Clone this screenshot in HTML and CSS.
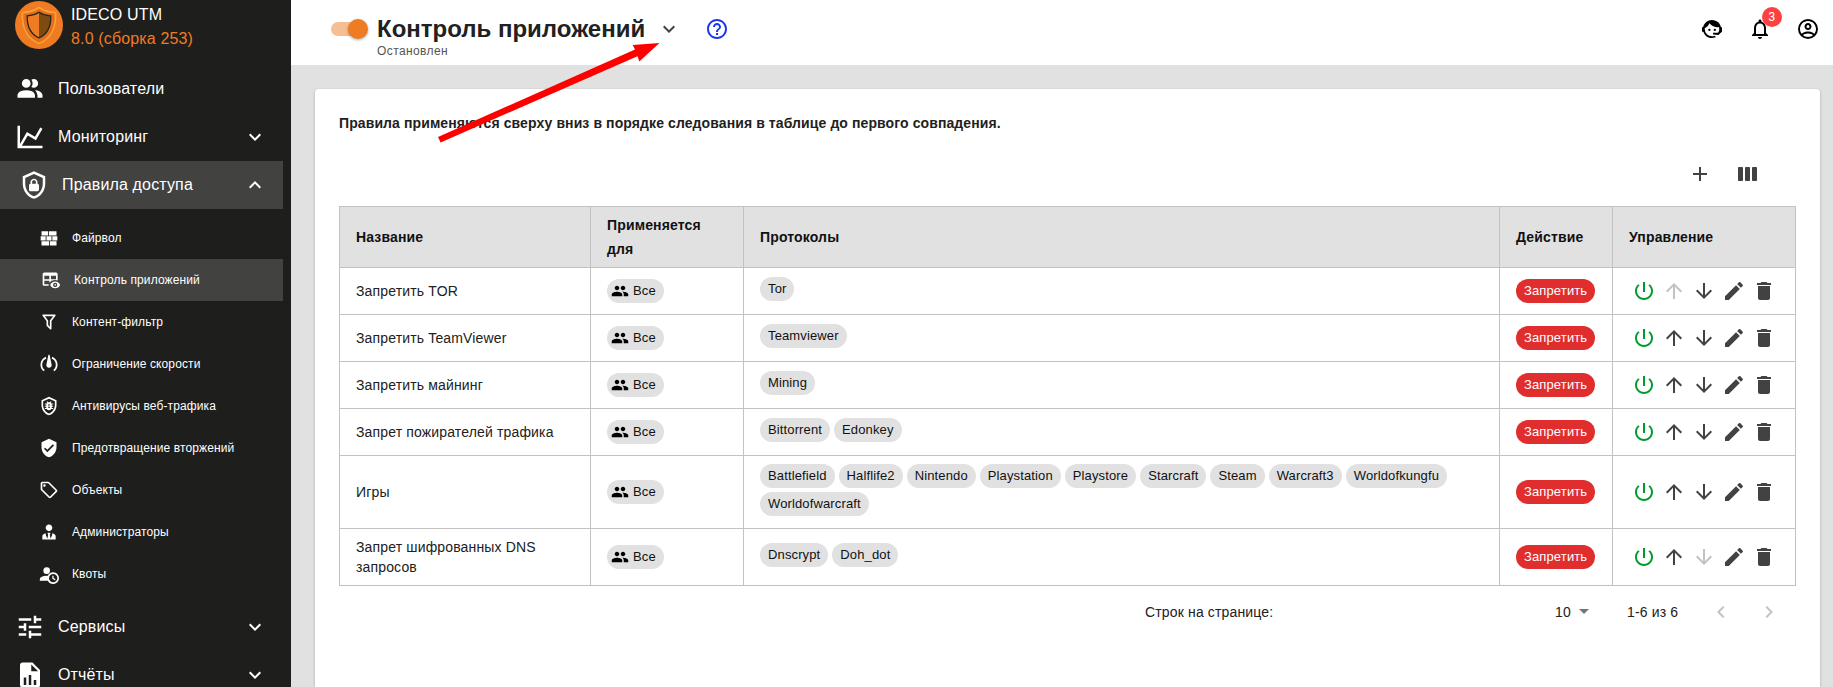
FILE: index.html
```html
<!DOCTYPE html>
<html lang="ru">
<head>
<meta charset="utf-8">
<title>IDECO UTM – Контроль приложений</title>
<link rel="stylesheet" href="styles.css">
</head>
<body>
<svg class="sprite" aria-hidden="true">
  <symbol id="users" viewBox="0 0 24 24"><path d="M13.07 10.41A5 5 0 0 0 13.07 4.59A3.39 3.39 0 0 1 15 4A3.5 3.5 0 0 1 15 11A3.39 3.39 0 0 1 13.07 10.41M5.5 7.5A3.5 3.5 0 1 1 12.5 7.5A3.5 3.5 0 0 1 5.5 7.5M16 17V19H2V17S2 13 9 13S16 17 16 17M15.95 13A5.32 5.32 0 0 1 18 17V19H22V17S22 13.37 15.95 13Z"/></symbol>
  <symbol id="chart" viewBox="0 0 24 24"><path d="M16 11.78L20.24 4.45L21.97 5.45L16.74 14.5L10.23 10.75L5.46 19H22V21H2V3H4V17.54L9.5 8L16 11.78Z"/></symbol>
  <symbol id="shield-lock" viewBox="0 0 24 24"><path d="M21 11C21 16.55 17.16 21.74 12 23C6.84 21.74 3 16.55 3 11V5L12 1L21 5V11M12 21C15.75 20 19 15.54 19 11.22V6.3L12 3.18L5 6.3V11.22C5 15.54 8.25 20 12 21M14.8 11V9.5C14.8 8.1 13.4 7 12 7C10.6 7 9.2 8.1 9.2 9.5V11C8.6 11 8 11.6 8 12.2V15.7C8 16.4 8.6 17 9.2 17H14.7C15.4 17 16 16.4 16 15.8V12.3C16 11.6 15.4 11 14.8 11M13.5 11H10.5V9.5C10.5 8.7 11.2 8.2 12 8.2C12.8 8.2 13.5 8.7 13.5 9.5V11Z"/></symbol>
  <symbol id="wall" viewBox="0 0 24 24"><path d="M3 16H12V21H3V16M2 10H8V15H2V10M9 10H15V15H9V10M16 10H22V15H16V10M13 16H21V21H13V16M3 4H11V9H3V4M12 4H21V9H12V4Z"/></symbol>
  <symbol id="table-eye" viewBox="0 0 24 24"><path d="M17 16.88C17.56 16.88 18 17.32 18 17.88S17.56 18.88 17 18.88 16 18.43 16 17.88 16.44 16.88 17 16.88M17 13.88C19.73 13.88 22.06 15.54 23 17.88C22.06 20.22 19.73 21.88 17 21.88S11.94 20.22 11 17.88C11.94 15.54 14.27 13.88 17 13.88M17 15.38C15.62 15.38 14.5 16.5 14.5 17.88S15.62 20.38 17 20.38 19.5 19.26 19.5 17.88 18.38 15.38 17 15.38M18 3H4C2.9 3 2 3.9 2 5V17C2 18.1 2.9 19 4 19H9.42C9.26 18.68 9.12 18.34 9 18C9.12 17.66 9.26 17.32 9.42 17H4V13H10V15.29C10.72 14.54 11.72 13.74 12 13.56V13H13.15C14.28 12.26 15.62 11.88 17 11.88C18.06 11.88 19.07 12.1 20 12.5V5C20 3.9 19.1 3 18 3M10 11H4V7H10V11M18 11H12V7H18V11Z"/></symbol>
  <symbol id="filter" viewBox="0 0 24 24"><path d="M15 19.88C15.04 20.18 14.94 20.5 14.71 20.71C14.32 21.1 13.69 21.1 13.3 20.71L9.29 16.7C9.06 16.47 8.96 16.16 9 15.87V10.75L4.21 4.62C3.87 4.19 3.95 3.56 4.38 3.22C4.57 3.08 4.78 3 5 3H19C19.22 3 19.43 3.08 19.62 3.22C20.05 3.56 20.13 4.19 19.79 4.62L15 10.75V19.88M7.04 5L11 10.06V15.58L13 17.58V10.05L16.96 5H7.04Z"/></symbol>
  <symbol id="speed" viewBox="0 0 24 24"><path d="M12 1C12.6 1 12.9 1.6 13 2.4L15.1 12.6A3.200 3.200 0 1 1 8.900 12.600L11 2.400C11.100 1.600 11.400 1 12 1Z"/><path d="M8.4 4.300A9.300 9.300 0 0 0 6.200 20M15.600 4.300A9.300 9.300 0 0 1 17.800 20" fill="none" stroke="currentColor" stroke-width="2.1"/></symbol>
  <symbol id="shield-bug" viewBox="0 0 24 24"><path d="M21 11C21 16.55 17.16 21.74 12 23C6.84 21.74 3 16.55 3 11V5L12 1L21 5V11M12 21C15.75 20 19 15.54 19 11.22V6.3L12 3.18L5 6.3V11.22C5 15.54 8.25 20 12 21"/><path fill-rule="evenodd" d="M17 9V10.1H15.3V11.6H17V12.8H15.3V14.3H17V15.5H14.8A3.2 3.2 0 0 1 9.2 15.5H7V14.3H8.7V12.8H7V11.6H8.7V10.1H7V9H9.2L10 8.2L8.9 7.1L9.8 6.3L11.2 7.6H12.8L14.2 6.3L15.1 7.1L14 8.2L14.8 9ZM10.8 10.2V11.4H13.2V10.2ZM10.8 13V14.2H13.2V13Z"/></symbol>
  <symbol id="shield-check" viewBox="0 0 24 24"><path d="M10 17L6 13L7.41 11.59L10 14.17L16.59 7.58L18 9M12 1L3 5V11C3 16.55 6.84 21.74 12 23C17.16 21.74 21 16.55 21 11V5L12 1Z"/></symbol>
  <symbol id="tag" viewBox="0 0 24 24"><path d="M21.41 11.58L12.41 2.58C12.04 2.21 11.53 2 11 2H4C2.9 2 2 2.9 2 4V11C2 11.53 2.21 12.04 2.59 12.41L11.58 21.41C11.95 21.78 12.47 22 13 22S14.04 21.79 14.41 21.41L21.41 14.41C21.79 14.04 22 13.53 22 13S21.79 11.96 21.41 11.58M13 20L4 11V4H11L20 13L13 20M6.5 5A1.5 1.5 0 1 1 6.5 8A1.5 1.5 0 0 1 6.5 5Z"/></symbol>
  <symbol id="admin" viewBox="0 0 24 24"><path d="M12 3C14.21 3 16 4.79 16 7S14.21 11 12 11 8 9.21 8 7 9.79 3 12 3M16 13.54C16 14.6 15.72 17.07 13.81 19.83L13 15L13.94 13.12C13.32 13.05 12.67 13 12 13S10.68 13.05 10.06 13.12L11 15L10.19 19.83C8.28 17.07 8 14.6 8 13.54C5.61 14.24 4 15.5 4 17V21H20V17C20 15.5 18.4 14.24 16 13.54Z"/></symbol>
  <symbol id="quota" viewBox="0 0 24 24"><path d="M10.63 14.1C12.23 10.58 16.38 9.03 19.9 10.63C23.42 12.23 24.97 16.38 23.37 19.9C22.24 22.4 19.75 24 17 24C14.3 24 11.83 22.44 10.67 20H1V18C1.06 16.86 1.84 15.93 3.34 15.18C4.84 14.43 6.72 14.04 9 14C9.57 14 10.11 14.05 10.63 14.1M9 4A3.95 3.98 0 1 1 9 11.95A3.95 3.98 0 0 1 9 4M17 22A5 5 0 0 0 22 17A5 5 0 0 0 17 12A5 5 0 0 0 12 17A5 5 0 0 0 17 22M16 14H17.5V16.82L19.94 18.23L19.19 19.53L16 17.69V14Z"/></symbol>
  <symbol id="tune" viewBox="0 0 24 24"><path d="M3 17V19H9V17H3M3 5V7H13V5H3M13 21V19H21V17H13V15H11V21H13M7 9V11H3V13H7V15H9V9H7M21 13V11H11V13H21M15 9H17V7H21V5H17V3H15V9Z"/></symbol>
  <symbol id="report" viewBox="0 0 24 24"><path d="M13 9H18.5L13 3.5V9M6 2H14L20 8V20A2 2 0 0 1 18 22H6C4.89 22 4 21.1 4 20V4C4 2.89 4.89 2 6 2M7 20H9V14H7V20M11 20H13V12H11V20M15 20H17V16H15V20Z"/></symbol>
  <symbol id="down" viewBox="0 0 24 24"><path d="M7.41 8.59L12 13.17L16.59 8.59L18 10L12 16L6 10Z"/></symbol>
  <symbol id="up" viewBox="0 0 24 24"><path d="M7.41 15.41L12 10.83L16.59 15.41L18 14L12 8L6 14Z"/></symbol>
  <symbol id="prev" viewBox="0 0 24 24"><path d="M15.41 7.41L10.83 12L15.41 16.59L14 18L8 12L14 6Z"/></symbol>
  <symbol id="next" viewBox="0 0 24 24"><path d="M8.59 7.41L13.17 12L8.59 16.59L10 18L16 12L10 6Z"/></symbol>
  <symbol id="help" viewBox="0 0 24 24"><path d="M11 18h2v-2h-2v2zm1-16C6.48 2 2 6.48 2 12s4.48 10 10 10 10-4.48 10-10S17.52 2 12 2zm0 18c-4.41 0-8-3.59-8-8s3.59-8 8-8 8 3.59 8 8-3.59 8-8 8zm0-14c-2.21 0-4 1.79-4 4h2c0-1.1.9-2 2-2s2 .9 2 2c0 2-3 1.75-3 5h2c0-2.25 3-2.5 3-5 0-2.21-1.79-4-4-4z"/></symbol>
  <symbol id="agent" viewBox="0 0 24 24"><path d="M18.72 14.76C19.07 13.91 19.26 13 19.26 12C19.26 11.28 19.15 10.59 18.96 9.95C18.31 10.1 17.63 10.18 16.92 10.18C13.86 10.18 11.15 8.67 9.5 6.34C8.61 8.5 6.91 10.26 4.77 11.22C4.73 11.47 4.73 11.74 4.73 12A7.27 7.27 0 0 0 12 19.27C13.05 19.27 14.06 19.04 14.97 18.63C15.54 19.72 15.8 20.26 15.78 20.26C14.14 20.81 12.87 21.08 12 21.08C9.58 21.08 7.27 20.13 5.57 18.42C4.53 17.38 3.76 16.11 3.33 14.73H2V10.18H3.09C3.93 6.04 7.6 2.92 12 2.92C14.4 2.92 16.71 3.87 18.42 5.58C19.69 6.84 20.54 8.45 20.89 10.18H22V14.73H21.94L18.38 18L13.08 17.4V15.73H17.91L18.72 14.76M9.27 11.77A1.14 1.14 0 1 1 9.27 14.04A1.14 1.14 0 0 1 9.27 11.77M14.72 11.77A1.14 1.14 0 1 1 14.72 14.04A1.14 1.14 0 0 1 14.72 11.77Z"/></symbol>
  <symbol id="bell" viewBox="0 0 24 24"><path d="M12 22c1.1 0 2-.9 2-2h-4c0 1.1.9 2 2 2zm6-6v-5c0-3.07-1.63-5.64-4.5-6.32V4c0-.83-.67-1.5-1.5-1.5s-1.5.67-1.5 1.5v.68C7.64 5.36 6 7.92 6 11v5l-2 2v1h16v-1l-2-2zm-2 1H8v-6c0-2.48 1.51-4.5 4-4.5s4 2.02 4 4.5v6z"/></symbol>
  <symbol id="account" viewBox="0 0 24 24"><path d="M12 2A10 10 0 0 0 2 12A10 10 0 0 0 12 22A10 10 0 0 0 22 12A10 10 0 0 0 12 2M7.07 18.28C7.5 17.38 10.12 16.5 12 16.5C13.88 16.5 16.5 17.38 16.93 18.28C15.57 19.36 13.86 20 12 20C10.14 20 8.43 19.36 7.07 18.28M18.36 16.83C16.93 15.09 13.46 14.5 12 14.5C10.54 14.5 7.07 15.09 5.64 16.83C4.62 15.5 4 13.82 4 12C4 7.59 7.59 4 12 4C16.41 4 20 7.59 20 12C20 13.82 19.38 15.5 18.36 16.83M12 6C10.06 6 8.5 7.56 8.5 9.5C8.5 11.44 10.06 13 12 13C13.94 13 15.5 11.44 15.5 9.5C15.5 7.56 13.94 6 12 6M12 11A1.5 1.5 0 0 1 10.5 9.5A1.5 1.5 0 0 1 12 8A1.5 1.5 0 0 1 13.5 9.5A1.5 1.5 0 0 1 12 11Z"/></symbol>
  <symbol id="plus" viewBox="0 0 24 24"><path d="M19 13H13V19H11V13H5V11H11V5H13V11H19V13Z"/></symbol>
  <symbol id="columns" viewBox="0 0 24 24"><rect x="2" y="5" width="5" height="14" rx=".8"/><rect x="9" y="5" width="5" height="14" rx=".8"/><rect x="16" y="5" width="5" height="14" rx=".8"/></symbol>
  <symbol id="group" viewBox="0 0 24 24"><path d="M16 11c1.66 0 2.99-1.34 2.99-3S17.66 5 16 5c-1.66 0-3 1.34-3 3s1.34 3 3 3zm-8 0c1.66 0 2.99-1.34 2.99-3S9.66 5 8 5C6.34 5 5 6.34 5 8s1.34 3 3 3zm0 2c-2.33 0-7 1.17-7 3.5V19h14v-2.5c0-2.33-4.67-3.5-7-3.5zm8 0c-.29 0-.62.02-.97.05 1.16.84 1.97 1.97 1.97 3.45V19h6v-2.5c0-2.33-4.67-3.5-7-3.5z"/></symbol>
  <symbol id="power" viewBox="0 0 24 24"><path d="M13 3h-2v10h2V3zm4.83 2.17l-1.42 1.42C17.99 7.86 19 9.81 19 12c0 3.87-3.13 7-7 7s-7-3.13-7-7c0-2.19 1.01-4.14 2.58-5.42L6.17 5.17C4.23 6.82 3 9.26 3 12c0 4.97 4.03 9 9 9s9-4.03 9-9c0-2.74-1.23-5.18-3.17-6.83z"/></symbol>
  <symbol id="arrow-up" viewBox="0 0 24 24"><path d="M4 12l1.41 1.41L11 7.83V20h2V7.83l5.58 5.59L20 12l-8-8-8 8z"/></symbol>
  <symbol id="arrow-down" viewBox="0 0 24 24"><path d="M20 12l-1.41-1.41L13 16.17V4h-2v12.17l-5.58-5.59L4 12l8 8 8-8z"/></symbol>
  <symbol id="edit" viewBox="0 0 24 24"><path d="M3 17.25V21h3.75L17.81 9.94l-3.75-3.75L3 17.25zM20.71 7.04c.39-.39.39-1.02 0-1.41l-2.34-2.34c-.39-.39-1.02-.39-1.41 0l-1.83 1.83 3.75 3.75 1.83-1.83z"/></symbol>
  <symbol id="delete" viewBox="0 0 24 24"><path d="M6 19c0 1.1.9 2 2 2h8c1.1 0 2-.9 2-2V7H6v12zM19 4h-3.5l-1-1h-5l-1 1H5v2h14V4z"/></symbol>
</svg>

<div class="app">
  <aside class="sidebar">
    <div class="brand">
      <svg class="logo" viewBox="0 0 48 48">
        <circle cx="24" cy="24" r="24" fill="#ef7c22"/>
        <path d="M24 6.5C19.5 9.8 13.5 11.4 7.5 11.6C6.8 25 11 37 24 42.5C37 37 41.2 25 40.5 11.6C34.5 11.4 28.5 9.8 24 6.5Z" fill="#e0701b" stroke="#ffa035" stroke-width="1.6"/>
        <path d="M24 11.3C20.5 13.6 16.5 14.6 12.2 14.9C12 24.5 14.8 32.8 24 36.9C33.2 32.8 36 24.5 35.8 14.9C31.5 14.6 27.5 13.6 24 11.3Z" fill="#ef7c22"/>
        <path d="M24 11.3C27.5 13.6 31.5 14.6 35.8 14.9C36 24.5 33.2 32.8 24 36.9Z" fill="#7d4a10"/>
        <path d="M24 11.3C20.5 13.6 16.5 14.6 12.2 14.9C12 24.5 14.8 32.8 24 36.9C33.2 32.8 36 24.5 35.8 14.9C31.5 14.6 27.5 13.6 24 11.3Z" fill="none" stroke="#26241f" stroke-width="1.3"/>
      </svg>
      <div class="brand-text"><div>IDECO UTM</div><div class="version">8.0 (сборка 253)</div></div>
    </div>
    <nav class="menu">
      <a class="item"><svg class="i30"><use href="#users"/></svg><span>Пользователи</span></a>
      <a class="item"><svg class="i30"><use href="#chart"/></svg><span>Мониторинг</span><svg class="i24"><use href="#down"/></svg></a>
      <a class="item active"><svg class="i30"><use href="#shield-lock"/></svg><span>Правила доступа</span><svg class="i24"><use href="#up"/></svg></a>
      <div class="submenu">
        <a class="sub"><svg class="i20"><use href="#wall"/></svg><span>Файрвол</span></a>
        <a class="sub active"><svg class="i20"><use href="#table-eye"/></svg><span>Контроль приложений</span></a>
        <a class="sub"><svg class="i20"><use href="#filter"/></svg><span>Контент-фильтр</span></a>
        <a class="sub"><svg class="i20"><use href="#speed"/></svg><span>Ограничение скорости</span></a>
        <a class="sub"><svg class="i20"><use href="#shield-bug"/></svg><span>Антивирусы веб-трафика</span></a>
        <a class="sub"><svg class="i20"><use href="#shield-check"/></svg><span>Предотвращение вторжений</span></a>
        <a class="sub"><svg class="i20"><use href="#tag"/></svg><span>Объекты</span></a>
        <a class="sub"><svg class="i20"><use href="#admin"/></svg><span>Администраторы</span></a>
        <a class="sub"><svg class="i20"><use href="#quota"/></svg><span>Квоты</span></a>
      </div>
      <a class="item"><svg class="i30"><use href="#tune"/></svg><span>Сервисы</span><svg class="i24"><use href="#down"/></svg></a>
      <a class="item"><svg class="i30"><use href="#report"/></svg><span>Отчёты</span><svg class="i24"><use href="#down"/></svg></a>
    </nav>
  </aside>

  <div class="main">
    <header class="header">
      <div class="switch"><div class="thumb"></div></div>
      <div class="heading"><h1>Контроль приложений</h1><div class="status">Остановлен</div></div>
      <svg class="i24 expand"><use href="#down"/></svg>
      <svg class="i24 help"><use href="#help"/></svg>
      <div class="tools">
        <svg class="i24"><use href="#agent"/></svg>
        <div class="bell"><svg class="i24"><use href="#bell"/></svg><span class="badge">3</span></div>
        <svg class="i24"><use href="#account"/></svg>
      </div>
    </header>
    <section class="card">
      <p class="note">Правила применяются сверху вниз в порядке следования в таблице до первого совпадения.</p>
      <div class="toolbar"><svg class="i24"><use href="#plus"/></svg><svg class="i24"><use href="#columns"/></svg></div>
      <table class="rules">
        <colgroup><col class="c-name"><col class="c-for"><col class="c-proto"><col class="c-action"><col class="c-manage"></colgroup>
        <thead><tr><th>Название</th><th>Применяется для</th><th>Протоколы</th><th>Действие</th><th>Управление</th></tr></thead>
        <tbody>
          <tr><td>Запретить TOR</td><td><span class="chip who"><svg><use href="#group"/></svg>Все</span></td>
            <td><div class="chips"><span class="chip">Tor</span></div></td><td><span class="chip deny">Запретить</span></td>
            <td><div class="acts"><svg class="on"><use href="#power"/></svg><svg class="off"><use href="#arrow-up"/></svg><svg><use href="#arrow-down"/></svg><svg><use href="#edit"/></svg><svg><use href="#delete"/></svg></div></td></tr>
          <tr><td>Запретить TeamViewer</td><td><span class="chip who"><svg><use href="#group"/></svg>Все</span></td>
            <td><div class="chips"><span class="chip">Teamviewer</span></div></td><td><span class="chip deny">Запретить</span></td>
            <td><div class="acts"><svg class="on"><use href="#power"/></svg><svg><use href="#arrow-up"/></svg><svg><use href="#arrow-down"/></svg><svg><use href="#edit"/></svg><svg><use href="#delete"/></svg></div></td></tr>
          <tr><td>Запретить майнинг</td><td><span class="chip who"><svg><use href="#group"/></svg>Все</span></td>
            <td><div class="chips"><span class="chip">Mining</span></div></td><td><span class="chip deny">Запретить</span></td>
            <td><div class="acts"><svg class="on"><use href="#power"/></svg><svg><use href="#arrow-up"/></svg><svg><use href="#arrow-down"/></svg><svg><use href="#edit"/></svg><svg><use href="#delete"/></svg></div></td></tr>
          <tr><td>Запрет пожирателей трафика</td><td><span class="chip who"><svg><use href="#group"/></svg>Все</span></td>
            <td><div class="chips"><span class="chip">Bittorrent</span><span class="chip">Edonkey</span></div></td><td><span class="chip deny">Запретить</span></td>
            <td><div class="acts"><svg class="on"><use href="#power"/></svg><svg><use href="#arrow-up"/></svg><svg><use href="#arrow-down"/></svg><svg><use href="#edit"/></svg><svg><use href="#delete"/></svg></div></td></tr>
          <tr class="tall"><td>Игры</td><td><span class="chip who"><svg><use href="#group"/></svg>Все</span></td>
            <td><div class="chips"><span class="chip">Battlefield</span><span class="chip">Halflife2</span><span class="chip">Nintendo</span><span class="chip">Playstation</span><span class="chip">Playstore</span><span class="chip">Starcraft</span><span class="chip">Steam</span><span class="chip">Warcraft3</span><span class="chip">Worldofkungfu</span><span class="chip">Worldofwarcraft</span></div></td><td><span class="chip deny">Запретить</span></td>
            <td><div class="acts"><svg class="on"><use href="#power"/></svg><svg><use href="#arrow-up"/></svg><svg><use href="#arrow-down"/></svg><svg><use href="#edit"/></svg><svg><use href="#delete"/></svg></div></td></tr>
          <tr class="double"><td>Запрет шифрованных DNS запросов</td><td><span class="chip who"><svg><use href="#group"/></svg>Все</span></td>
            <td><div class="chips"><span class="chip">Dnscrypt</span><span class="chip">Doh_dot</span></div></td><td><span class="chip deny">Запретить</span></td>
            <td><div class="acts"><svg class="on"><use href="#power"/></svg><svg><use href="#arrow-up"/></svg><svg class="off"><use href="#arrow-down"/></svg><svg><use href="#edit"/></svg><svg><use href="#delete"/></svg></div></td></tr>
        </tbody>
      </table>
      <div class="pager">
        <span class="per-page">Строк на странице:</span>
        <span class="select">10<i class="caret"></i></span>
        <span class="range">1-6 из 6</span>
        <svg class="i24"><use href="#prev"/></svg><svg class="i24"><use href="#next"/></svg>
      </div>
    </section>
  </div>
</div>
<svg class="pointer" viewBox="0 0 224 104"><path d="M1 98L198 10.5L195.7 6L222.5 4L202.3 22.6L200.5 17.2L3.6 103.5Z"/></svg>
</body>
</html>
```
FILE: styles.css
```css
* { box-sizing: border-box; }
body { margin: 0; height: 687px; overflow: hidden; position: relative; background: #e1e1e1; color: #212121; font: 14px/20px "Liberation Sans", Arial, sans-serif; letter-spacing: 0.15px; }
svg { fill: currentColor; display: block; flex: none; }
.sprite { display: none; }
.i20 { width: 20px; height: 20px; }
.i24 { width: 24px; height: 24px; }
.i30 { width: 30px; height: 30px; }
.app { display: flex; height: 687px; }

.sidebar { width: 291px; flex: none; background: #1e1e1c; color: #fff; overflow: hidden; }
.brand { display: flex; gap: 8px; height: 65px; padding: 1px 0 0 15px; }
.logo { width: 48px; height: 48px; }
.brand-text { font-size: 16px; line-height: 24px; padding-top: 2px; }
.version { color: #ef7c22; }
.menu { width: 283px; }
.item { display: flex; align-items: center; height: 48px; padding: 0 16px 0 15px; font-size: 16px; }
.item span { flex: 1; padding-left: 13px; }
.item.active { background: #424240; padding-left: 19px; }
.submenu { padding: 8px 0; }
.sub { display: flex; align-items: center; gap: 13px; height: 42px; padding-left: 39px; font-size: 12px; letter-spacing: 0.11px; }
.sub.active { background: #424240; padding-left: 41px; }

.main { flex: 1; display: flex; flex-direction: column; min-width: 0; }
.header { display: flex; align-items: flex-start; height: 65px; flex: none; background: #fff; padding: 17px 13px 0 40px; }
.switch { width: 34px; height: 14px; margin: 5px 12px 0 0; border-radius: 7px; background: #f6bf93; }
.thumb { width: 20px; height: 20px; margin: -3px 0 0 17px; border-radius: 50%; background: #ef7c22; box-shadow: 0 1px 3px rgba(0,0,0,.35); }
.heading h1 { margin: -2px 0 0; font-size: 24px; line-height: 28px; letter-spacing: 0; }
.status { font-size: 12px; line-height: 16px; letter-spacing: 0.4px; color: #555; }
.expand { margin-left: 12px; color: #424240; }
.help { margin-left: 24px; color: #1a36f0; }
.tools { display: flex; gap: 24px; margin-left: auto; color: #000; }
.bell { position: relative; }
.badge { position: absolute; left: 14px; top: -10px; width: 20px; height: 20px; border-radius: 50%; background: #ff4040; color: #fff; font: 12px/20px Roboto, sans-serif; text-align: center; }

.card { flex: 1; margin: 24px 13px 0 24px; padding: 24px; background: #fff; border-radius: 4px 4px 0 0; box-shadow: 0 1px 3px rgba(0,0,0,.25); }
.note { margin: 0; font-weight: 700; letter-spacing: 0.1px; }
.toolbar { display: flex; justify-content: flex-end; gap: 24px; padding: 29px 36px 20px; color: #424240; }
.rules { width: 1457px; table-layout: fixed; border-collapse: collapse; }
.c-name { width: 251px; }
.c-for { width: 153px; }
.c-proto { width: 756px; }
.c-action { width: 113px; }
.c-manage { width: 183px; }
th, td { height: 47px; padding: 0 16px; border: 1px solid #c2c2c2; text-align: left; vertical-align: middle; }
th { height: 61px; background: #e1e1e1; color: #111; line-height: 24px; }
.tall td { height: 73px; }
.double td { height: 57px; }
.chip { display: flex; align-items: center; width: max-content; height: 24px; padding: 0 8px; border-radius: 12px; background: #e1e1e1; color: #111; font-size: 13px; letter-spacing: 0.13px; }
.chips { display: flex; flex-wrap: wrap; gap: 4px; padding-bottom: 4px; }
.who { padding-left: 4px; gap: 4px; }
.who svg { width: 18px; height: 18px; color: #000; }
.deny { background: #e02e2e; color: #fff; }
.acts { display: flex; gap: 6px; padding-left: 3px; color: #424240; }
.acts svg { width: 24px; height: 24px; }
.acts .on { color: #009b2e; }
.acts .off { color: #c2c2c2; }
.pager { display: flex; align-items: center; height: 52px; padding-left: 806px; }
.pager span { flex: none; }
.per-page { width: 410px; }
.select { display: flex; align-items: center; gap: 8px; width: 72px; padding-bottom: 1px; }
.caret { border: 5px solid transparent; border-top-color: #757575; border-bottom: 0; }
.range { width: 82px; }
.pager svg { color: #c2c2c2; margin-right: 24px; }
.pager svg:last-child { margin-right: 0; }
.pointer { position: absolute; left: 437px; top: 39px; width: 224px; height: 104px; color: #f00; }
```
